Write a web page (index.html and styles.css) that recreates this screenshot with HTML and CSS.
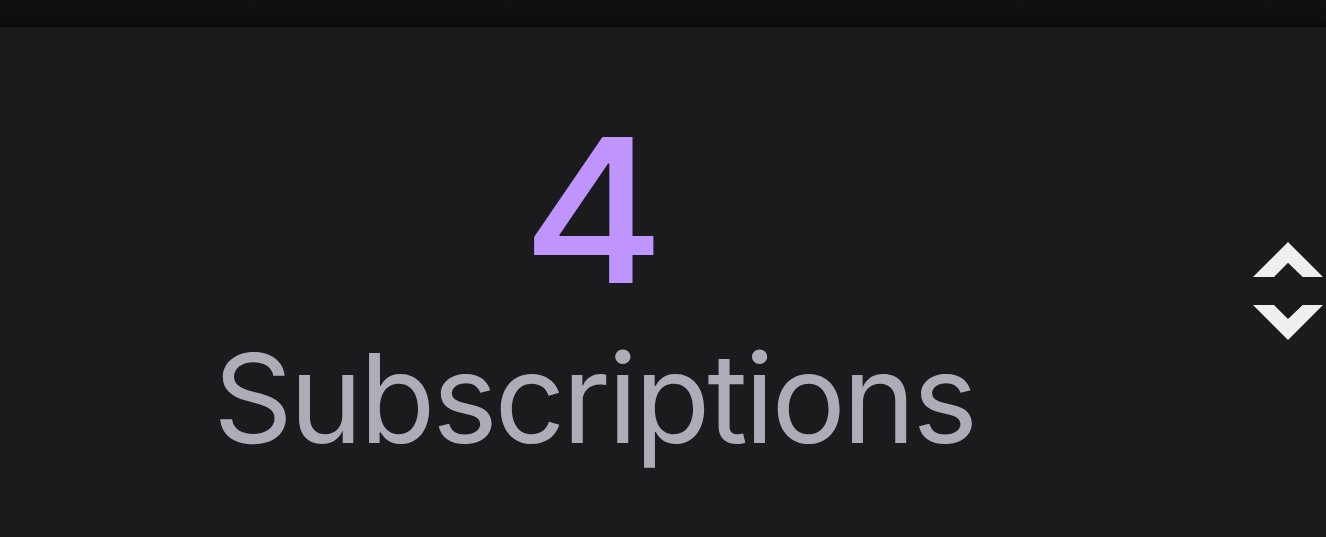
FILE: index.html
```html
<!DOCTYPE html>
<html>
<head>
    <title>Subscriptions</title>
    <link rel="stylesheet" href="styles.css">
</head>
<body>
    <div class="top-bar"></div>
    <div class="main">
        <div class="stat">
            <div class="stat-value">4</div>
            <div class="stat-label">Subscriptions</div>
        </div>
        <div class="sort-toggle">
            <svg class="sort-icon" viewBox="0 0 70 98" width="70" height="98">
                <polygon points="0,35 35,0 70,35 49.7,35 35,20.7 21,35" />
                <polygon points="0,63 21,63 35,77 49.7,63 70,63 35,98" />
            </svg>
        </div>
    </div>
</body>
</html>
```

FILE: styles.css
```css
body {
    font-family: Inter, "Noto Sans", sans-serif;
    margin: 0;
    background-color: #1b1b1e;
    color: #efeff1;
    overflow: hidden;
}

.top-bar {
    height: 27px;
    background: linear-gradient(to bottom, #111113 0%, #0e0e10 80%, #080809 100%);
}

.main {
    display: flex;
    height: 510px;
}

.stat {
    flex: 1;
    display: flex;
    flex-direction: column;
    align-items: center;
    padding-top: 83px;
}

.stat-value {
    font-size: 200px;
    font-weight: 450;
    line-height: 1;
    color: #bf94ff;
    transform: scaleX(1.09);
}

.stat-label {
    margin-top: 26px;
    font-size: 124px;
    line-height: 1;
    letter-spacing: -3.2px;
    color: #adadb8;
}

.sort-toggle {
    width: 138px;
    display: flex;
    justify-content: flex-end;
    padding-top: 215px;
    padding-right: 3px;
    box-sizing: border-box;
}

.sort-icon {
    fill: #efeff1;
}
```
